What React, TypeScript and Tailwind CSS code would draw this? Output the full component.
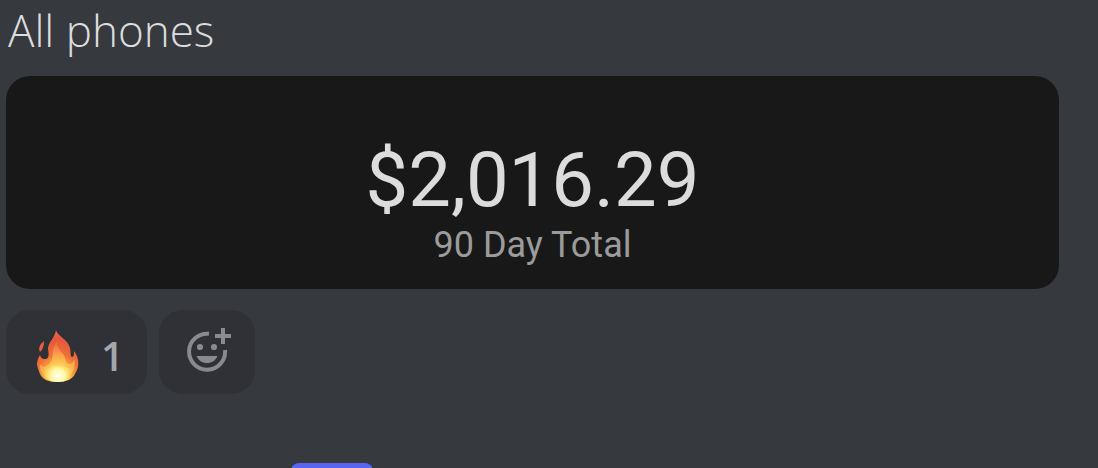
import React from "react";

function Flame() {
  return (
    <svg viewBox="0 0 42 52" className="h-[52px] w-[42px]" aria-hidden="true">
      <defs>
        <radialGradient id="flameOuter" gradientUnits="userSpaceOnUse" cx="21" cy="46" r="44">
          <stop offset="0" stopColor="#fff27a" />
          <stop offset="0.25" stopColor="#fbb445" />
          <stop offset="0.5" stopColor="#ee7038" />
          <stop offset="0.85" stopColor="#e4573b" />
          <stop offset="1" stopColor="#e8694c" />
        </radialGradient>
        <radialGradient id="flameMiddle" gradientUnits="userSpaceOnUse" cx="21" cy="45" r="34">
          <stop offset="0" stopColor="#fff79c" />
          <stop offset="0.35" stopColor="#fdc850" />
          <stop offset="0.7" stopColor="#f6914a" />
          <stop offset="1" stopColor="#ef7b49" stopOpacity="0.4" />
        </radialGradient>
        <radialGradient id="flameCore" gradientUnits="userSpaceOnUse" cx="21" cy="46" r="15">
          <stop offset="0" stopColor="#fffff0" />
          <stop offset="0.45" stopColor="#fff9a8" />
          <stop offset="1" stopColor="#ffdf5b" stopOpacity="0" />
        </radialGradient>
      </defs>
      <path fill="url(#flameOuter)" d="M19 0C20 6 31 9 33 18C34 22 33 26 35 27C37 27 37 24 37 21C41 26 42 32 41 37C40 41 38 43 38 44C36 49 29 52 20 52C11 52 5 49 3 44C2 41 1 39 0 35C0 31 1 28 3 25C4 29 6 29 9 29C12 28 12 24 11 19C11 12 18 8 19 0Z" />
      <path fill="#e9613e" d="M7 11C7 16 6 19 3 22C1 18 3 14 7 11Z" />
      <path fill="url(#flameMiddle)" d="M20 12C19 19 27 22 28 28C29 32 30 34 33 34C35 34 37 31 37 28C40 39 34 50 21 51C9 51 2 43 3 34C6 38 10 37 13 33C18 27 13 20 20 12Z" />
      <ellipse cx="21" cy="44" rx="15" ry="8" fill="url(#flameCore)" />
    </svg>
  );
}

function AddReactionIcon() {
  return (
    <svg viewBox="0 0 44 44" className="size-11" aria-hidden="true">
      <path d="M22 5.8A18 18 0 1 0 38 22" fill="none" stroke="#888a8f" strokeWidth="4" />
      <g fill="#888a8f">
        <circle cx="13" cy="19" r="3.1" />
        <circle cx="27" cy="19" r="3.1" />
        <path d="M9.500 28H30.500C28.500 32.500 25 35 20 35C15 35 11.500 32.500 9.500 28Z" />
        <path d="M34 0H38V6H44V10H38V16H34V10H28V6H34Z" />
      </g>
    </svg>
  );
}

export default function App() {
  return (
    <main className="flex h-screen flex-col overflow-hidden bg-[#36393e] pr-[39px] pl-1.5 font-['Open_Sans','Noto_Sans',sans-serif]">
      <h1 className="h-[76px] shrink-0 pl-0.5 text-[44px] leading-[60px] font-light text-[#dcddde]">All phones</h1>
      <section className="flex shrink-0 flex-col items-center rounded-3xl bg-[#181818] pt-[60px] pb-[22px] font-['Roboto',sans-serif]">
        <p className="text-[76px] leading-[88px] text-[#dcdcdc]">$2,016.29</p>
        <p className="text-4xl leading-[43px] text-[#9b9b9b]">90 Day Total</p>
      </section>
      <div className="mt-[21px] flex shrink-0 gap-3">
        <button type="button" aria-label="Fire reaction, 1" className="flex h-[84px] w-[141px] items-center gap-[22px] rounded-3xl bg-[#2f3136] pt-2 pl-[31px]">
          <Flame />
          <span className="text-[40px] leading-none font-semibold text-[#a3a6aa]">1</span>
        </button>
        <button type="button" aria-label="Add reaction" className="flex h-[84px] w-24 items-start justify-center rounded-3xl bg-[#2f3136] pt-[18px] pl-1">
          <AddReactionIcon />
        </button>
      </div>
      <div className="mt-[69px] ml-[285px] h-10 w-[82px] shrink-0 rounded-lg bg-[#5865f2]" />
    </main>
  );
}
